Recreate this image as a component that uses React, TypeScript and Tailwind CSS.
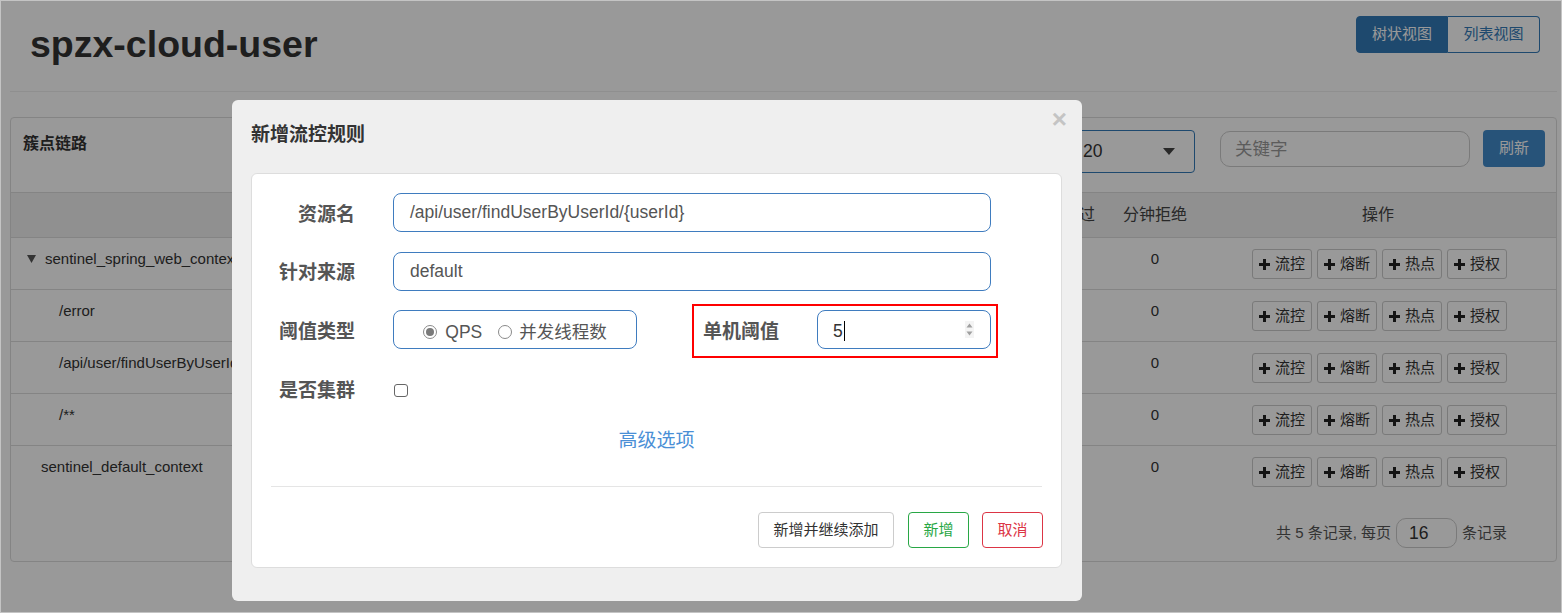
const rows = [
  { name: 'sentinel_spring_web_context', indent: 'pl-[16px]', caret: true },
  { name: '/error', indent: 'pl-[48px]' },
  { name: '/api/user/findUserByUserId/{userId}', indent: 'pl-[48px]' },
  { name: '/**', indent: 'pl-[48px]' },
  { name: 'sentinel_default_context', indent: 'pl-[30px]' },
];

const actions = ['流控', '熔断', '热点', '授权'];

function Plus() {
  return (
    <svg width="11" height="11" viewBox="0 0 11 11" className="shrink-0">
      <path d="M4 0h3v4h4v3H7v4H4V7H0V4h4z" fill="#222" />
    </svg>
  );
}

function Radio({ checked }: { checked?: boolean }) {
  return (
    <span className="flex h-[14px] w-[14px] items-center justify-center rounded-full border border-[#8a8a8a] bg-white">
      {checked && <span className="h-[8px] w-[8px] rounded-full bg-[#7a7a7a]" />}
    </span>
  );
}

function Page() {
  return (
    <div>
      <div className="ml-[9px] mr-[4px] flex h-[91px] justify-between border-b border-[#eee]">
        <h1 className="pl-[20px] pt-[25px] text-[37.5px] font-bold leading-[36px] text-[#333]">spzx-cloud-user</h1>
        <div className="flex pr-[17px] pt-[15px]">
          <button className="h-[37px] w-[92px] rounded-l-[4px] border border-[#337ab7] bg-[#337ab7] text-[15px] text-white">
            树状视图
          </button>
          <button className="h-[37px] w-[92px] rounded-r-[4px] border border-l-0 border-[#337ab7] bg-white text-[15px] text-[#337ab7]">
            列表视图
          </button>
        </div>
      </div>

      <div className="ml-[9px] mr-[4px] mt-[25px] h-[445px] rounded-[4px] border border-[#ddd]">
        <div className="flex h-[75px] justify-between border-b border-[#ddd]">
          <div className="pl-[12px] pt-[16px] text-[16px] font-bold leading-[20px] text-[#333]">簇点链路</div>
          <div className="flex items-start pr-[11px] pt-[12px]">
            <div className="flex h-[43px] w-[130px] items-center justify-between rounded-[4px] border border-[#337ab7] pl-[17px] pr-[19px] text-[17.5px] text-[#333]">
              <span>20</span>
              <svg width="12" height="7" viewBox="0 0 12 7">
                <path d="M0 0h12L6 7z" fill="#444" />
              </svg>
            </div>
            <div className="ml-[25px] mt-[1px] flex h-[36px] w-[250px] items-center rounded-[10px] border border-[#ccc] pl-[14px] text-[17.5px] text-[#999]">
              关键字
            </div>
            <button className="ml-[13px] h-[37px] w-[62px] rounded-[4px] bg-[#428bca] text-[15px] text-white">刷新</button>
          </div>
        </div>

        <div className="flex h-[44px] items-center bg-[#f0f0f0] text-[16px] text-[#444]">
          <div className="flex-1" />
          <div className="w-[94px] text-center">分钟通过</div>
          <div className="w-[90px] text-center">分钟拒绝</div>
          <div className="w-[356px] text-center">操作</div>
        </div>

        {rows.map((row) => (
          <div key={row.name} className="flex h-[52px] items-start border-t border-[#ddd] pt-[11px] text-[15px] leading-[20px] text-[#333]">
            <div className={`flex flex-1 items-center gap-[9px] ${row.indent}`}>
              {row.caret && (
                <svg width="9" height="8" viewBox="0 0 9 8">
                  <path d="M0 0h9L4.5 8z" fill="#555" />
                </svg>
              )}
              <span>{row.name}</span>
            </div>
            <div className="w-[94px] text-center">0</div>
            <div className="w-[90px] text-center">0</div>
            <div className="flex w-[356px] justify-center gap-[5px] pl-[3px]">
              {actions.map((a) => (
                <button
                  key={a}
                  className="flex h-[30px] w-[60px] items-center justify-center gap-[5px] rounded-[3px] border border-[#ccc] bg-white text-[15px] text-[#333]"
                >
                  <Plus />
                  {a}
                </button>
              ))}
            </div>
          </div>
        ))}

        <div className="flex items-center justify-end gap-[5px] pr-[49px] pt-[21px] text-[15px] text-[#555]">
          <span>共 5 条记录, 每页</span>
          <div className="flex h-[30px] w-[61px] items-center rounded-[10px] border border-[#ccc] pl-[12px] text-[17.5px] text-[#333]">
            16
          </div>
          <span>条记录</span>
        </div>
      </div>
    </div>
  );
}

function Modal() {
  return (
    <div className="absolute left-[231px] top-[99px] h-[501px] w-[850px] rounded-[6px] bg-[#efefef] px-[19px] pt-[22px]">
      <div className="absolute right-[15px] top-[6px] text-[26px] font-bold leading-[26px] text-[#c4c4c4]">×</div>
      <h4 className="text-[19px] font-bold leading-[26px] text-[#333]">新增流控规则</h4>

      <div className="mt-[25px] h-[395px] w-[811px] rounded-[6px] border border-[#ddd] bg-white pt-[19px]">
        <div className="flex h-[39px] items-center">
          <label className="w-[103px] pt-[6px] text-right text-[19px] font-bold text-[#555]">资源名</label>
          <div className="ml-[38px] flex h-[39px] w-[598px] items-center rounded-[8px] border border-[#3f7cbf] pl-[16px] text-[17.5px] text-[#555]">
            /api/user/findUserByUserId/{'{userId}'}
          </div>
        </div>

        <div className="mt-[20px] flex h-[39px] items-center">
          <label className="w-[103px] pt-[4px] text-right text-[19px] font-bold text-[#555]">针对来源</label>
          <div className="ml-[38px] flex h-[39px] w-[598px] items-center rounded-[8px] border border-[#3f7cbf] pl-[16px] text-[17.5px] text-[#555]">
            default
          </div>
        </div>

        <div className="mt-[19px] flex h-[39px] items-start">
          <label className="flex h-[39px] w-[103px] items-center justify-end pt-[6px] text-[19px] font-bold text-[#555]">阈值类型</label>
          <div className="ml-[38px] flex h-[39px] w-[244px] items-center justify-center rounded-[8px] border border-[#3f7cbf] pt-[5px] text-[17.5px] text-[#555]">
            <Radio checked />
            <span className="ml-[8px]">QPS</span>
            <span className="ml-[16px]">
              <Radio />
            </span>
            <span className="ml-[7px]">并发线程数</span>
          </div>
          <div className="-mb-[9px] -mt-[6px] ml-[55px] flex border-2 border-[#ff0000] pb-[7px] pl-[9px] pr-[5px] pt-[4px]">
            <label className="flex h-[39px] w-[76px] items-center pt-[6px] text-[19px] font-bold text-[#555]">单机阈值</label>
            <div className="ml-[38px] flex h-[39px] w-[174px] items-center justify-between rounded-[8px] border border-[#3f7cbf] pl-[15px] pr-[16px] text-[17.5px] text-[#333]">
              <span className="flex items-center pt-[3px]">
                5<span className="ml-[1px] h-[20px] w-px bg-black" />
              </span>
              <svg width="9" height="17" viewBox="0 0 9 17">
                <rect width="9" height="17" fill="#f4f4f4" />
                <path d="M1.5 6.5h6L4.5 2.5z" fill="#a0a0a0" />
                <path d="M1.5 10.5h6L4.5 14.5z" fill="#a0a0a0" />
              </svg>
            </div>
          </div>
        </div>

        <div className="mt-[22px] flex h-[39px] items-center">
          <label className="w-[103px] pt-[2px] text-right text-[19px] font-bold text-[#555]">是否集群</label>
          <span className="ml-[39px] h-[13px] w-[14px] rounded-[3px] border border-[#666] bg-white" />
        </div>

        <div className="mt-[18px] text-center text-[19px] leading-[26px] text-[#4a8fd6]">高级选项</div>

        <div className="mx-[19px] mt-[32px] border-t border-[#e5e5e5]" />

        <div className="mt-[25px] flex justify-end gap-[14px] pr-[18px] text-[15px]">
          <button className="h-[36px] w-[136px] rounded-[4px] border border-[#ccc] bg-white text-[#333]">新增并继续添加</button>
          <button className="h-[36px] w-[61px] rounded-[4px] border border-[#28a745] bg-white text-[#28a745]">新增</button>
          <button className="-ml-px h-[36px] w-[61px] rounded-[4px] border border-[#dc3545] bg-white text-[#dc3545]">取消</button>
        </div>
      </div>
    </div>
  );
}

export default function App() {
  return (
    <div className="h-[613px] w-[1562px] overflow-hidden border border-[#c4c4c4] bg-white font-['Liberation_Sans','Noto_Sans_CJK_SC',sans-serif]">
      <div className="relative h-full">
        <Page />
        <div className="absolute inset-0 bg-black/40" />
        <Modal />
      </div>
    </div>
  );
}
